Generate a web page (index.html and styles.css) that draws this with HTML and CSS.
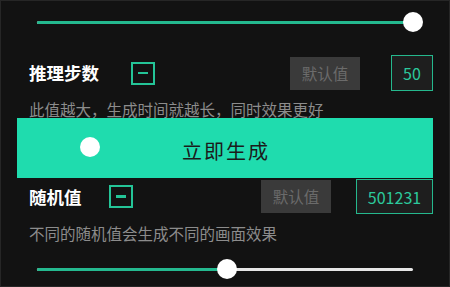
FILE: index.html
```html
<!DOCTYPE html>
<html lang="zh">
<head>
<meta charset="utf-8">
<link rel="stylesheet" href="styles.css">
</head>
<body>
<div class="page">
  <div class="slider slider-top">
    <div class="track">
      <div class="fill" style="width:100%"></div>
      <div class="thumb" style="left:100%"></div>
    </div>
  </div>

  <div class="row row-steps">
    <span class="label">推理步数</span>
    <span class="check check-steps"><span class="dash"></span></span>
    <span class="spacer"></span>
    <span class="default-btn">默认值</span>
    <span class="value-box value-steps">50</span>
  </div>
  <div class="desc desc-steps">此值越大，生成时间就越长，同时效果更好</div>

  <div class="generate">
    <span class="touch"></span>
    <span class="gen-text">立即生成</span>
  </div>

  <div class="row row-seed">
    <span class="label">随机值</span>
    <span class="check check-seed"><span class="dash"></span></span>
    <span class="spacer"></span>
    <span class="default-btn">默认值</span>
    <span class="value-box value-seed">501231</span>
  </div>
  <div class="desc desc-seed">不同的随机值会生成不同的画面效果</div>

  <div class="slider slider-bottom">
    <div class="track">
      <div class="fill" style="width:50.5%"></div>
      <div class="thumb" style="left:50.5%"></div>
    </div>
  </div>
</div>
</body>
</html>
```

FILE: styles.css
```css
html, body {
  margin: 0;
  padding: 0;
  background: #121212;
}
body {
  width: 450px;
  height: 287px;
  overflow: hidden;
  font-family: "Noto Sans CJK SC", "Noto Sans", sans-serif;
}
.page {
  width: 450px;
  height: 287px;
  box-sizing: border-box;
  border: 1px solid #262626;
  display: flex;
  flex-direction: column;
  overflow: hidden;
}
.slider {
  flex: none;
  height: 44px;
  display: flex;
  align-items: center;
  padding: 0 36px 0 36px;
}
.slider-top { margin-top: -1px; }
.slider-bottom { margin-top: 4px; }
.track {
  position: relative;
  flex: 1;
  height: 3px;
  background: #e6e6e6;
  border-radius: 2px;
}
.fill {
  height: 100%;
  background: #24b98f;
  border-radius: 2px;
}
.thumb {
  position: absolute;
  top: 50%;
  width: 20px;
  height: 20px;
  margin: -10px 0 0 -10px;
  border-radius: 50%;
  background: #ffffff;
}
.row {
  flex: none;
  display: flex;
  align-items: center;
  padding: 0 16px 0 28px;
}
.row-steps {
  height: 36px;
  margin-top: 11px;
}
.row-seed {
  height: 35px;
  margin-top: 1px;
}
.label {
  color: #ffffff;
  font-weight: bold;
  font-size: 17.5px;
  line-height: 20px;
}
.check {
  box-sizing: border-box;
  width: 24px;
  height: 23px;
  border: 2px solid #24c497;
  display: flex;
  align-items: center;
  justify-content: center;
}
.check-steps { margin-left: 32px; }
.check-seed { margin-left: 27px; }
.dash {
  width: 10px;
  height: 2.5px;
  background: #24c497;
}
.spacer { flex: 1; }
.default-btn {
  box-sizing: border-box;
  width: 70px;
  height: 33px;
  background: #3a3a3a;
  color: #6b6b6b;
  font-size: 15.5px;
  line-height: 33px;
  text-align: center;
}
.value-box {
  box-sizing: border-box;
  border: 1.5px solid #25b88d;
  background: #1e1e1e;
  color: #2cc99c;
  font-size: 16px;
  display: flex;
  align-items: center;
  justify-content: center;
}
.value-steps {
  width: 42px;
  height: 36px;
  margin-left: 31px;
}
.value-seed {
  width: 77px;
  height: 35px;
  margin-left: 25px;
}
.desc {
  flex: none;
  padding-left: 28px;
  color: #8c8c8c;
  font-size: 15.5px;
  line-height: 19px;
  white-space: nowrap;
}
.desc-steps { margin-top: 9px; height: 18px; }
.desc-seed { margin-top: 9px; height: 20px; line-height: 20px; }
.generate {
  flex: none;
  position: relative;
  margin: 0 16px 0 16px;
  height: 60px;
  box-sizing: border-box;
  padding-top: 6px;
  background: #1fdcae;
  display: flex;
  align-items: center;
  justify-content: center;
}
.gen-text {
  color: #1b1b1b;
  font-size: 20px;
  letter-spacing: 2px;
  margin-left: 2px;
  line-height: 24px;
}
.touch {
  position: absolute;
  left: 63px;
  top: 19px;
  width: 20px;
  height: 20px;
  border-radius: 50%;
  background: #ffffff;
}
```
